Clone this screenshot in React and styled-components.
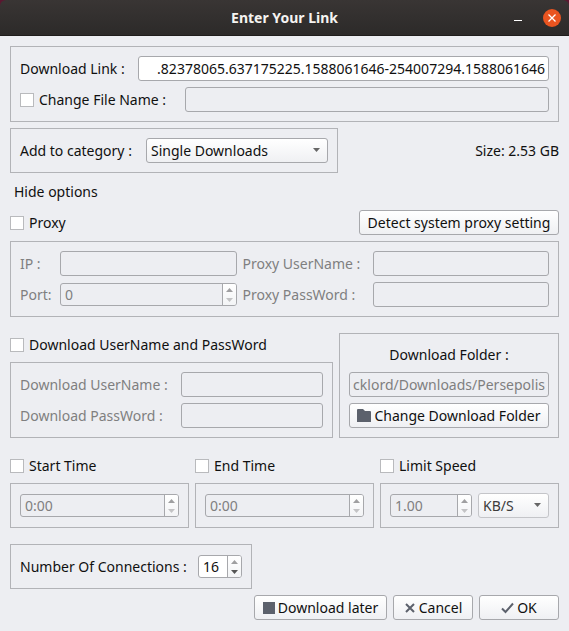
import React, { useEffect, useRef, useState } from 'react'
import styled, { createGlobalStyle, ThemeProvider } from 'styled-components';

const theme = {
    colors: {
        window: '#edeef2',
        frame: '#b2b3b7',
        border: '#a7a8ac',
        text: '#101010',
        muted: '#7f7f80',
        icon: '#5c616c',
        orange: '#e95420',
    },
}

const GlobalStyle = createGlobalStyle`
    * {
        box-sizing: border-box;
    }

    body {
        margin: 0;
        background: #edeef2;
    }

    body, input, select, button {
        font-family: 'Noto Sans', 'Open Sans', sans-serif;
        font-size: 14px;
        line-height: 19px;
    }
`

const Window = styled.div`
    display: flex;
    flex-direction: column;
    min-height: 100vh;
    background: ${props => props.theme.colors.window};
    color: ${props => props.theme.colors.text};
`

const TitleBarBack = styled.div`
    background: #5a1730;
`

const TitleBar = styled.header`
    display: grid;
    grid-template-columns: 1fr auto 1fr;
    align-items: center;
    height: 36px;
    padding: 0 8px;
    border-bottom: 1px solid #1f1d1c;
    border-radius: 6px 6px 0 0;
    background: linear-gradient(#393534, #2c2a29);
`

const Title = styled.h1`
    grid-column: 2;
    margin: 0;
    font-size: 14px;
    color: #f5f3f1;
`

const WindowButtons = styled.div`
    display: flex;
    justify-content: flex-end;
    gap: 16px;
`

const WindowButton = styled.button`
    display: flex;
    align-items: center;
    justify-content: center;
    width: 18px;
    height: 18px;
    padding: 0;
    border: 0;
    border-radius: 50%;
    background: ${props => props.$close ? props.theme.colors.orange : 'transparent'};
`

const Form = styled.form`
    display: flex;
    flex-direction: column;
    gap: 16px;
    padding: 10px;
`

const Stack = styled.div`
    display: flex;
    flex-direction: column;
    gap: 6px;
    min-width: 0;
`

const Columns = styled.div`
    display: grid;
    grid-template-columns: ${props => props.$columns};
    align-items: center;
    gap: 6px;
`

const Frame = styled.div`
    display: flex;
    flex-direction: column;
    gap: 6px;
    padding: 9px;
    border: 1px solid ${props => props.theme.colors.frame};
    color: ${props => props.$off ? props.theme.colors.muted : 'inherit'};
`

const Row = styled.div`
    display: flex;
    align-items: center;
    justify-content: ${props => props.$justify || 'flex-start'};
    gap: 6px;
    min-height: ${props => props.$low ? '23px' : '25px'};
`

const Label = styled.label`
    flex: none;
    width: ${props => props.$width || 'auto'};
    white-space: nowrap;
`

const CheckLabel = styled(Label)`
    display: flex;
    align-items: center;
    gap: 5px;
`

const CheckBox = styled.input`
    appearance: none;
    flex: none;
    width: 14px;
    height: 14px;
    margin: 0;
    border: 1px solid #b9babd;
    background: #fff;

    &:checked {
        border: 3px solid #fff;
        outline: 1px solid #b9babd;
        outline-offset: -1px;
        background: ${props => props.theme.colors.icon};
    }
`

const TextInput = styled.input`
    flex: 1;
    width: 100%;
    min-width: 0;
    height: 25px;
    padding: ${props => props.$end ? '0 3px 0 0' : '0 4px'};
    border: 1px solid ${props => props.theme.colors.border};
    border-radius: 3px;
    outline: 0;
    background: #fff;
    color: ${props => props.theme.colors.text};
    text-align: ${props => props.$end ? 'right' : 'left'};

    &:disabled {
        background: transparent;
        color: ${props => props.theme.colors.muted};
    }
`

const SpinBox = styled.div`
    display: flex;
    flex: ${props => props.$width ? 'none' : '1'};
    width: ${props => props.$width || 'auto'};
    min-width: 0;
    height: 23px;
    border: 1px solid ${props => props.theme.colors.border};
    border-radius: 3px;
    background: ${props => props.$off ? 'transparent' : '#fff'};
    overflow: hidden;
`

const SpinInput = styled.input`
    flex: 1;
    width: 100%;
    min-width: 0;
    padding: 0 4px;
    border: 0;
    outline: 0;
    background: transparent;
    color: ${props => props.theme.colors.text};

    &:disabled {
        color: ${props => props.theme.colors.muted};
    }
`

const Steppers = styled.div`
    display: flex;
    flex-direction: column;
    flex: none;
    width: 14px;
    border-left: 1px solid ${props => props.theme.colors.border};
    background: linear-gradient(#fff, #f3f4f6);
`

const Stepper = styled.button`
    display: flex;
    flex: 1;
    align-items: ${props => props.$down ? 'flex-start' : 'flex-end'};
    justify-content: center;
    padding: 3px 0;
    border: 0;
    background: transparent;
    color: ${props => props.$dark ? '#555' : props.$down ? '#c3c3c5' : '#9f9fa1'};
`

const SelectBox = styled.div`
    position: relative;
    flex: 1;
    min-width: 0;

    svg {
        position: absolute;
        top: 10px;
        right: 8px;
        color: #666;
        pointer-events: none;
    }
`

const Select = styled.select`
    appearance: none;
    display: block;
    width: 100%;
    height: 25px;
    padding: 0 20px 0 4px;
    border: 1px solid ${props => props.theme.colors.border};
    border-radius: 3px;
    background: linear-gradient(#fff, #eff0f3);
    color: ${props => props.theme.colors.text};

    &:disabled {
        border-color: #c4c5c9;
        color: #3c3c3c;
        opacity: 1;
    }
`

const Button = styled.button`
    display: flex;
    align-items: center;
    justify-content: center;
    gap: 3px;
    min-width: ${props => props.$width || '0'};
    height: 25px;
    padding: 0 3px;
    border: 1px solid ${props => props.theme.colors.border};
    border-radius: 3px;
    background: linear-gradient(#fff, #eff0f3);
    color: ${props => props.theme.colors.text};
    white-space: nowrap;

    svg {
        flex: none;
        color: ${props => props.theme.colors.icon};
    }
`

const FlatButton = styled(Button)`
    align-self: flex-start;
    border-color: transparent;
    background: transparent;
`

const Arrow = ({ up }) => (
    <svg width="7" height="4" viewBox="0 0 7 4" aria-hidden="true">
        <path d={up ? 'M0 4L3.5 0L7 4Z' : 'M0 0H7L3.5 4Z'} fill="currentColor" />
    </svg>
)

const FolderIcon = () => (
    <svg width="14" height="13" viewBox="0 0 14 13" aria-hidden="true">
        <path d="M0 1Q0 0 1 0H6L8 2H13Q14 2 14 3V13H0Z" fill="currentColor" />
    </svg>
)

const SquareIcon = () => (
    <svg width="12" height="12" viewBox="0 0 12 12" aria-hidden="true">
        <rect width="12" height="12" fill="currentColor" />
    </svg>
)

const CrossIcon = () => (
    <svg width="12" height="10" viewBox="0 0 12 10" aria-hidden="true">
        <path d="M2 1L10 9M10 1L2 9" stroke="currentColor" strokeWidth="2" />
    </svg>
)

const CheckIcon = () => (
    <svg width="13" height="12" viewBox="0 0 13 12" aria-hidden="true">
        <path d="M1 6.5L4.5 10L12 1.5" fill="none" stroke="currentColor" strokeWidth="2" />
    </svg>
)

// Text field that stays scrolled to the end of its value
const EndInput = props => {
    const ref = useRef(null);

    useEffect(() => {
        ref.current.scrollLeft = ref.current.scrollWidth;
    }, []);

    return <TextInput ref={ref} type="text" $end {...props} />
}

const Spin = ({ id, label, value, width, disabled, canGrow }) => (
    <SpinBox $width={width} $off={disabled}>
        <SpinInput id={id} aria-label={label} type="text" defaultValue={value} disabled={disabled} />
        <Steppers>
            <Stepper type="button" aria-label="Increase" disabled={disabled || !canGrow}>
                <Arrow up />
            </Stepper>
            <Stepper type="button" aria-label="Decrease" disabled={disabled} $down $dark={!disabled}>
                <Arrow />
            </Stepper>
        </Steppers>
    </SpinBox>
)

const Check = ({ children, width, ...rest }) => (
    <CheckLabel $width={width}>
        <CheckBox type="checkbox" {...rest} />
        {children}
    </CheckLabel>
)

const initial = {
    fileName: false,
    proxy: false,
    auth: false,
    start: false,
    end: false,
    limit: false,
}

export default () => {
    const [on, setOn] = useState(initial);
    const bind = key => ({
        checked: on[key],
        onChange: e => setOn({ ...on, [key]: e.target.checked }),
    });

    return (
        <ThemeProvider theme={theme}>
            <GlobalStyle />
            <Window>
                <TitleBarBack>
                    <TitleBar>
                        <Title>Enter Your Link</Title>
                        <WindowButtons>
                            <WindowButton type="button" aria-label="Minimize">
                                <svg width="8" height="8" viewBox="0 0 8 8">
                                    <path d="M0 6.5H8" stroke="#fff" />
                                </svg>
                            </WindowButton>
                            <WindowButton type="button" aria-label="Close" $close>
                                <svg width="8" height="8" viewBox="0 0 8 8">
                                    <path d="M0.5 0.5L7.5 7.5M7.5 0.5L0.5 7.5" stroke="#fff" strokeWidth="1.3" />
                                </svg>
                            </WindowButton>
                        </WindowButtons>
                    </TitleBar>
                </TitleBarBack>

                <Form onSubmit={e => e.preventDefault()}>
                    <Stack>
                        <Frame>
                            <Row>
                                <Label htmlFor="link" $width="112px">Download Link :</Label>
                                <EndInput id="link" defaultValue=".82378065.637175225.1588061646-254007294.1588061646" />
                            </Row>
                            <Row>
                                <Check width="159px" {...bind('fileName')}>Change File Name :</Check>
                                <TextInput type="text" aria-label="File name" disabled={!on.fileName} />
                            </Row>
                        </Frame>

                        <Columns $columns="minmax(0, 328px) 1fr">
                            <Frame>
                                <Row>
                                    <Label htmlFor="category" $width="120px">Add to category :</Label>
                                    <SelectBox>
                                        <Select id="category">
                                            <option>Single Downloads</option>
                                        </Select>
                                        <Arrow />
                                    </SelectBox>
                                </Row>
                            </Frame>
                            <Row $justify="flex-end">Size: 2.53 GB</Row>
                        </Columns>

                        <FlatButton type="button">Hide options</FlatButton>

                        <Row $justify="space-between">
                            <Check {...bind('proxy')}>Proxy</Check>
                            <Button type="button" $width="200px">Detect system proxy setting</Button>
                        </Row>

                        <Frame $off={!on.proxy}>
                            <Columns $columns="34px 1fr 124px 1fr">
                                <Label htmlFor="ip">IP :</Label>
                                <TextInput id="ip" type="text" disabled={!on.proxy} />
                                <Label htmlFor="proxy-user">Proxy UserName :</Label>
                                <TextInput id="proxy-user" type="text" disabled={!on.proxy} />
                                <Label htmlFor="port">Port:</Label>
                                <Spin id="port" value="0" disabled={!on.proxy} canGrow />
                                <Label htmlFor="proxy-pass">Proxy PassWord :</Label>
                                <TextInput id="proxy-pass" type="password" disabled={!on.proxy} />
                            </Columns>
                        </Frame>
                    </Stack>

                    <Columns $columns="1fr 220px">
                        <Stack>
                            <Row $low>
                                <Check {...bind('auth')}>Download UserName and PassWord</Check>
                            </Row>
                            <Frame $off={!on.auth}>
                                <Row>
                                    <Label htmlFor="user" $width="155px">Download UserName :</Label>
                                    <TextInput id="user" type="text" disabled={!on.auth} />
                                </Row>
                                <Row>
                                    <Label htmlFor="pass" $width="155px">Download PassWord :</Label>
                                    <TextInput id="pass" type="password" disabled={!on.auth} />
                                </Row>
                            </Frame>
                        </Stack>
                        <Frame>
                            <Row $low $justify="center">
                                <Label htmlFor="folder">Download Folder :</Label>
                            </Row>
                            <Row>
                                <EndInput id="folder" defaultValue="cklord/Downloads/Persepolis" disabled />
                            </Row>
                            <Button type="button">
                                <FolderIcon />
                                Change Download Folder
                            </Button>
                        </Frame>
                    </Columns>

                    <Columns $columns="1fr 1fr 1fr">
                        <Stack>
                            <Row $low>
                                <Check {...bind('start')}>Start Time</Check>
                            </Row>
                            <Frame>
                                <Row>
                                    <Spin label="Start time" value="0:00" disabled={!on.start} canGrow />
                                </Row>
                            </Frame>
                        </Stack>
                        <Stack>
                            <Row $low>
                                <Check {...bind('end')}>End Time</Check>
                            </Row>
                            <Frame>
                                <Row>
                                    <Spin label="End time" value="0:00" disabled={!on.end} canGrow />
                                </Row>
                            </Frame>
                        </Stack>
                        <Stack>
                            <Row $low>
                                <Check {...bind('limit')}>Limit Speed</Check>
                            </Row>
                            <Frame>
                                <Row>
                                    <Spin label="Speed" value="1.00" width="82px" disabled={!on.limit} canGrow />
                                    <SelectBox>
                                        <Select aria-label="Speed unit" disabled={!on.limit}>
                                            <option>KB/S</option>
                                        </Select>
                                        <Arrow />
                                    </SelectBox>
                                </Row>
                            </Frame>
                        </Stack>
                    </Columns>

                    <Stack>
                        <Row>
                            <Frame>
                                <Row>
                                    <Label htmlFor="connections" $width="172px">Number Of Connections :</Label>
                                    <Spin id="connections" value="16" width="44px" />
                                </Row>
                            </Frame>
                        </Row>
                        <Row $justify="flex-end">
                            <Button type="button" $width="133px">
                                <SquareIcon />
                                Download later
                            </Button>
                            <Button type="button" $width="80px">
                                <CrossIcon />
                                Cancel
                            </Button>
                            <Button type="submit" $width="80px">
                                <CheckIcon />
                                OK
                            </Button>
                        </Row>
                    </Stack>
                </Form>
            </Window>
        </ThemeProvider>
    );
}
